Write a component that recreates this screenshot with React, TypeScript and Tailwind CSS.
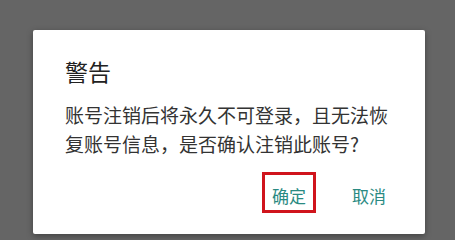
import React from "react";

const FONT = { fontFamily: '"Noto Sans CJK SC", "Noto Sans", sans-serif' };

export default function App() {
  return (
    <div
      className="flex h-[240px] w-[455px] overflow-hidden bg-[#656565] pl-[33px] pt-[30px]"
      style={FONT}
    >
      {/* 对话框 */}
      <div className="flex h-[204px] w-[392px] flex-col rounded-[2px] bg-white px-[32px] pt-[27px] shadow-[0_2px_6px_rgba(0,0,0,0.35)]">
        <div className="text-[23px] leading-[28px] text-[#212121]">警告</div>
        <p className="mt-[15px] text-[19px] leading-[29px] text-[#333333]">
          账号注销后将永久不可登录，且无法恢复账号信息，是否确认注销此账号?
        </p>

        {/* 按钮 */}
        <div className="mt-[14px] flex items-start justify-end gap-[33px] pr-[4px]">
          <button
            type="button"
            className="flex h-[41px] w-[54px] items-center justify-center border-[3px] border-[#d0141c] pt-[6px] text-[17px] text-[#2a8a82]"
          >
            确定
          </button>
          <button
            type="button"
            className="flex h-[41px] w-[40px] items-center justify-center pt-[6px] text-[17px] text-[#2a8a82]"
          >
            取消
          </button>
        </div>
      </div>
    </div>
  );
}
